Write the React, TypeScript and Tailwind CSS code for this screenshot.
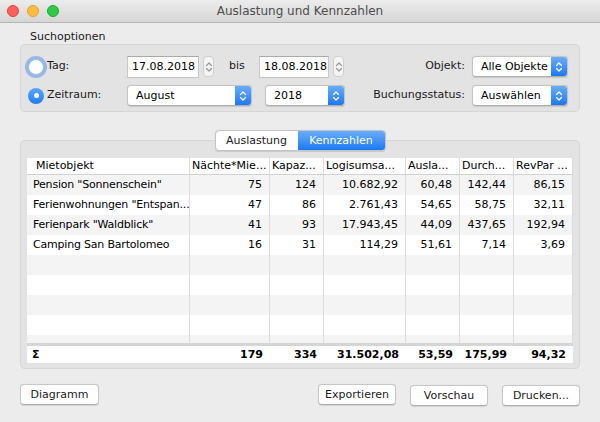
import type { ReactNode } from 'react'

const HEAD = ['Mietobjekt', 'Nächte*Mie...', 'Kapaz...', 'Logisumsa...', 'Ausla...', 'Durch...', 'RevPar ...']

const ROWS = [
  ['Pension "Sonnenschein"', '75', '124', '10.682,92', '60,48', '142,44', '86,15'],
  ['Ferienwohnungen "Entspan...', '47', '86', '2.761,43', '54,65', '58,75', '32,11'],
  ['Ferienpark "Waldblick"', '41', '93', '17.943,45', '44,09', '437,65', '192,94'],
  ['Camping San Bartolomeo', '16', '31', '114,29', '51,61', '7,14', '3,69'],
  ['', '', '', '', '', '', ''],
  ['', '', '', '', '', '', ''],
  ['', '', '', '', '', '', ''],
  ['', '', '', '', '', '', ''],
  ['', '', '', '', '', '', ''],
]

const TOTALS = ['Σ', '179', '334', '31.502,08', '53,59', '175,99', '94,32']

const COLS = 'grid grid-cols-[163px_80px_54px_82px_54px_54px_59px]'

function Chevrons({ color = 'white' }: { color?: string }) {
  return (
    <svg width="8" height="12" viewBox="0 0 8 12" fill="none" stroke={color} strokeWidth="1.3" strokeLinecap="round" strokeLinejoin="round">
      <path d="M1.5 4.5L4 2l2.5 2.5" />
      <path d="M1.5 7.5L4 10l2.5-2.5" />
    </svg>
  )
}

function Popup({ label, width }: { label: string; width: string }) {
  return (
    <div className={`${width} flex h-[21px] items-stretch overflow-hidden rounded-[4px] border border-[#c4c4c4] border-b-[#aeaeae] bg-white shadow-[0_0.5px_1px_rgba(0,0,0,0.12)]`}>
      <span className="flex-1 whitespace-nowrap pl-[8px] text-[11px] leading-[19px] text-black">{label}</span>
      <span className="flex w-[16px] shrink-0 items-center justify-center bg-gradient-to-b from-[#68adfc] to-[#1a78f3]">
        <Chevrons />
      </span>
    </div>
  )
}

function DateField({ value, width }: { value: string; width: string }) {
  return (
    <div className="flex items-center">
      <div className={`${width} h-[22px] whitespace-nowrap border border-[#c8c8c8] border-t-[#aaaaaa] bg-white pl-[4px] text-[11px] leading-[20px] text-black`}>
        {value}
      </div>
      <div className="ml-[4px] flex h-[21px] w-[11px] items-center justify-center rounded-[4px] border border-[#cfcfcf] bg-[#f4f4f4]">
        <Chevrons color="#9a9a9a" />
      </div>
    </div>
  )
}

function Radio({ checked, label }: { checked?: boolean; label: string }) {
  return (
    <div className="flex w-[106px] items-center pl-[7px]">
      {checked ? (
        <span className="flex h-[16px] w-[16px] items-center justify-center rounded-full bg-gradient-to-b from-[#5aa6fb] to-[#1f7cf4]">
          <span className="h-[5px] w-[5px] rounded-full bg-white" />
        </span>
      ) : (
        <span className="h-[16px] w-[16px] rounded-full border border-[#9bbde8] bg-white shadow-[0_0_0_3px_rgba(90,150,230,0.55)]" />
      )}
      <span className="ml-[3px] text-[11px] text-[#1a1a1a]">{label}</span>
    </div>
  )
}

function Button({ children, width }: { children: ReactNode; width: string }) {
  return (
    <button
      type="button"
      className={`${width} h-[21px] rounded-[4px] border border-[#c6c6c6] border-b-[#acacac] bg-white text-[11px] leading-[19px] text-[#1a1a1a] shadow-[0_0.5px_1px_rgba(0,0,0,0.1)]`}
    >
      {children}
    </button>
  )
}

export default function App() {
  return (
    <div className="flex h-[422px] w-[600px] flex-col overflow-hidden bg-[#ececec] font-['DejaVu_Sans',sans-serif] text-black">
      {/* title bar */}
      <div className="relative flex h-[23px] shrink-0 items-center border-b border-[#b5b5b5] bg-gradient-to-b from-[#ececec] to-[#d6d6d6] pl-[7px]">
        <div className="flex gap-[8px]">
          <span className="h-[12px] w-[12px] rounded-full border border-[#e0443e] bg-[#fc605c]" />
          <span className="h-[12px] w-[12px] rounded-full border border-[#dea236] bg-[#fdbc40]" />
          <span className="h-[12px] w-[12px] rounded-full border border-[#1aab29] bg-[#34c84a]" />
        </div>
        <div className="absolute inset-0 flex items-center justify-center text-[12px] text-[#4d4d4d]">
          Auslastung und Kennzahlen
        </div>
      </div>

      <div className="flex flex-col px-[20px]">
        <div className="mt-[7px] h-[14px] pl-[10px] text-[11px] leading-[14px] text-[#1a1a1a]">Suchoptionen</div>

        {/* search options box */}
        <div className="flex h-[68px] flex-col gap-[7px] rounded-[5px] border border-[#d6d6d6] bg-[#e3e3e3] pt-[10px] pr-[11px]">
          <div className="flex h-[23px] items-center">
            <Radio label="Tag:" />
            <DateField value="17.08.2018" width="w-[72px]" />
            <div className="w-[45px] pl-[15px] text-[11px] text-[#1a1a1a]">bis</div>
            <DateField value="18.08.2018" width="w-[70px]" />
            <div className="flex-1 whitespace-nowrap pr-[7px] text-right text-[11px] text-[#1a1a1a]">Objekt:</div>
            <Popup label="Alle Objekte" width="w-[96px]" />
          </div>
          <div className="flex h-[21px] items-center">
            <Radio checked label="Zeitraum:" />
            <Popup label="August" width="w-[125px]" />
            <div className="ml-[13px]">
              <Popup label="2018" width="w-[80px]" />
            </div>
            <div className="flex-1 whitespace-nowrap pr-[7px] text-right text-[11px] text-[#1a1a1a]">Buchungsstatus:</div>
            <Popup label="Auswählen" width="w-[96px]" />
          </div>
        </div>

        {/* segmented control */}
        <div className="relative z-10 mt-[18px] mb-[-11px] flex justify-center">
          <div className="flex h-[21px] overflow-hidden rounded-[4px] border border-[#c4c4c4] bg-white text-[11px] leading-[19px] shadow-[0_0.5px_1px_rgba(0,0,0,0.12)]">
            <span className="w-[82px] text-center text-[#1a1a1a]">Auslastung</span>
            <span className="w-[87px] bg-gradient-to-b from-[#68adfc] to-[#1a78f3] text-center text-white">Kennzahlen</span>
          </div>
        </div>

        {/* tab box with table */}
        <div className="rounded-[5px] border border-[#d6d6d6] bg-[#e3e3e3] px-[6px] pt-[17px] pb-[5px]">
          <div className="flex flex-col bg-white text-[11px]">
            <div className={`${COLS} h-[17px] border-b border-[#d2d2d2]`}>
              {HEAD.map((h, i) => (
                <div
                  key={h}
                  className={`overflow-hidden whitespace-nowrap border-r border-[#dcdcdc] leading-[16px] ${i === 0 ? 'pl-[9px]' : 'pl-[2px]'}`}
                >
                  {h}
                </div>
              ))}
            </div>
            <div className="h-[168px] overflow-hidden">
              {ROWS.map((r, ri) => (
                <div key={ri} className={`${COLS} h-[20px] ${ri % 2 === 0 ? 'bg-[#f4f4f4]' : 'bg-white'}`}>
                  {r.map((c, ci) => (
                    <div
                      key={ci}
                      className={`overflow-hidden whitespace-nowrap border-r border-[#dcdcdc] leading-[20px] ${ci === 0 ? 'pl-[6px] tracking-[-0.2px]' : 'pr-[7px] text-right'}`}
                    >
                      {c}
                    </div>
                  ))}
                </div>
              ))}
            </div>
            <div className={`${COLS} h-[20px] border-t-[3px] border-[#d5d5d5] font-bold`}>
              {TOTALS.map((c, ci) => (
                <div key={ci} className={`leading-[17px] ${ci === 0 ? 'pl-[5px]' : 'pr-[7px] text-right'}`}>
                  {c}
                </div>
              ))}
            </div>
          </div>
        </div>

        {/* buttons */}
        <div className="mt-[13px] flex items-center">
          <Button width="w-[79px]">Diagramm</Button>
          <div className="flex-1" />
          <Button width="w-[78px]">Exportieren</Button>
          <div className="ml-[14px]">
            <Button width="w-[78px]">Vorschau</Button>
          </div>
          <div className="ml-[14px]">
            <Button width="w-[78px]">Drucken...</Button>
          </div>
        </div>
      </div>
    </div>
  )
}
